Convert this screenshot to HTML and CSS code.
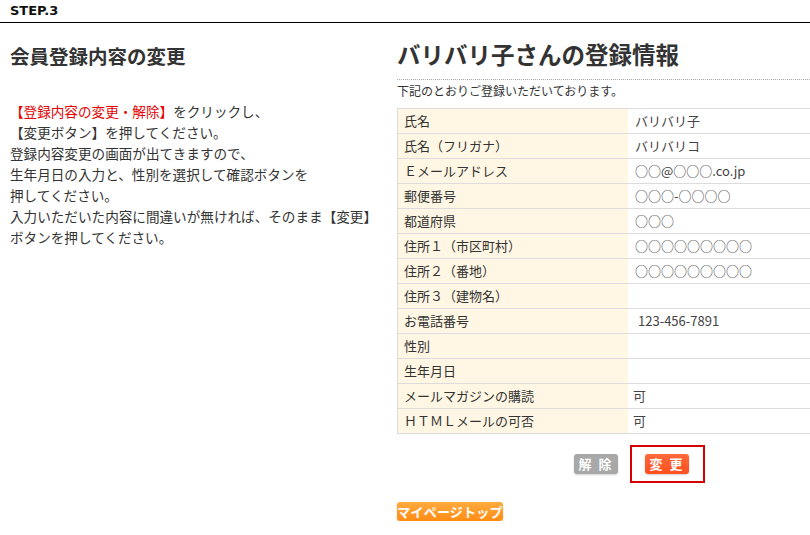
FILE: index.html
```html
<!DOCTYPE html>
<html lang="ja">
<head>
<meta charset="utf-8">
<link rel="stylesheet" href="styles.css">
</head>
<body>
<div class="step">STEP.3</div>
<div class="main">
  <div class="left">
    <h2 class="left-title">会員登録内容の変更</h2>
    <p class="desc"><span class="red">【登録内容の変更・解除】</span>をクリックし、<br>【変更ボタン】を押してください。<br>登録内容変更の画面が出てきますので、<br>生年月日の入力と、性別を選択して確認ボタンを<br>押してください。<br>入力いただいた内容に間違いが無ければ、そのまま【変更】<br>ボタンを押してください。</p>
  </div>
  <div class="right">
    <h1 class="right-title">バリバリ子さんの登録情報</h1>
    <p class="lead">下記のとおりご登録いただいております。</p>
    <table class="info">
      <tr><th>氏名</th><td>バリバリ子</td></tr>
      <tr><th>氏名（フリガナ）</th><td>バリバリコ</td></tr>
      <tr><th>Ｅメールアドレス</th><td>○○@○○○.co.jp</td></tr>
      <tr><th>郵便番号</th><td>○○○-○○○○</td></tr>
      <tr><th>都道府県</th><td>○○○</td></tr>
      <tr><th>住所１（市区町村）</th><td>○○○○○○○○○</td></tr>
      <tr><th>住所２（番地）</th><td>○○○○○○○○○</td></tr>
      <tr><th>住所３（建物名）</th><td></td></tr>
      <tr><th>お電話番号</th><td class="tel">123-456-7891</td></tr>
      <tr><th>性別</th><td></td></tr>
      <tr><th>生年月日</th><td></td></tr>
      <tr><th>メールマガジンの購読</th><td class="narrow">可</td></tr>
      <tr><th>ＨＴＭＬメールの可否</th><td class="narrow">可</td></tr>
    </table>
    <div class="actions">
      <span class="btn btn-grey">解 除</span>
      <div class="highlight"><span class="btn btn-red">変 更</span></div>
    </div>
    <div class="bottom">
      <span class="btn btn-orange">マイページトップ</span>
    </div>
  </div>
</div>
</body>
</html>
```

FILE: styles.css
```css
html, body {
  margin: 0;
  padding: 0;
  background: #fff;
  overflow: hidden;
}
body {
  font-family: "Noto Sans CJK JP", "Noto Sans", sans-serif;
  color: #333;
  width: 810px;
}
.step {
  height: 22px;
  line-height: 22px;
  padding-left: 10px;
  font-family: "DejaVu Sans", "Noto Sans", sans-serif;
  font-weight: bold;
  font-size: 13px;
  color: #111;
  border-bottom: 1px solid #000;
}
.main {
  display: flex;
}
.left {
  width: 397px;
  flex: none;
  padding-left: 10px;
  box-sizing: border-box;
}
.left-title {
  margin: 21px 0 0;
  font-size: 19.5px;
  line-height: 24px;
  font-weight: bold;
  color: #333;
}
.desc {
  margin: 33px 0 0;
  font-size: 13.6px;
  line-height: 21px;
  color: #333;
}
.red {
  color: #e60000;
}
.right {
  flex: 1;
  min-width: 0;
}
.right-title {
  margin: 15px 0 0;
  font-size: 23.5px;
  line-height: 32px;
  font-weight: bold;
  color: #333;
  padding-bottom: 9px;
  border-bottom: 1px dotted #aaa;
}
.lead {
  margin: 2px 0 0;
  font-size: 12px;
  line-height: 18px;
  color: #333;
}
.info {
  margin-top: 8px;
  width: 100%;
  border-collapse: collapse;
  font-size: 13px;
}
.info th, .info td {
  height: 24px;
  padding: 0;
  border-top: 1px solid #dcdcdc;
  border-bottom: 1px solid #dcdcdc;
  font-weight: normal;
  text-align: left;
  line-height: 24px;
  color: #333;
  white-space: nowrap;
}
.info th {
  width: 224px;
  padding-left: 6px;
  background: #fff7e3;
  border-left: 1px solid #dcdcdc;
}
.info td {
  padding-left: 7px;
  background: #fff;
  color: #444;
}
.info td.tel {
  padding-left: 10px;
}
.info td.narrow {
  padding-left: 5px;
}
.actions {
  display: flex;
  align-items: center;
  padding-left: 177px;
  margin-top: 11px;
  gap: 12px;
}
.btn {
  display: block;
  color: #fff;
  font-weight: bold;
  font-size: 13px;
  line-height: 20px;
  height: 20px;
  text-align: center;
  border-radius: 3px;
  box-shadow: 0 1px 2px rgba(0,0,0,0.18);
  font-family: "Noto Sans CJK JP", sans-serif;
}
.btn-grey {
  width: 44px;
  background: #a8a8a8;
  letter-spacing: 2px;
}
.btn-red {
  width: 44px;
  background: linear-gradient(#ff6a3a, #ff4e1e);
  letter-spacing: 2px;
}
.highlight {
  display: flex;
  width: 75px;
  height: 38px;
  box-sizing: border-box;
  border: 2px solid #d60000;
  padding: 7px 0 0 13px;
}
.bottom {
  display: flex;
  margin-top: 19px;
}
.btn-orange {
  width: 106px;
  height: 19px;
  line-height: 19px;
  font-size: 13px;
  background: linear-gradient(#ffab3f, #ff8c14);
  letter-spacing: 0.2px;
}
```
